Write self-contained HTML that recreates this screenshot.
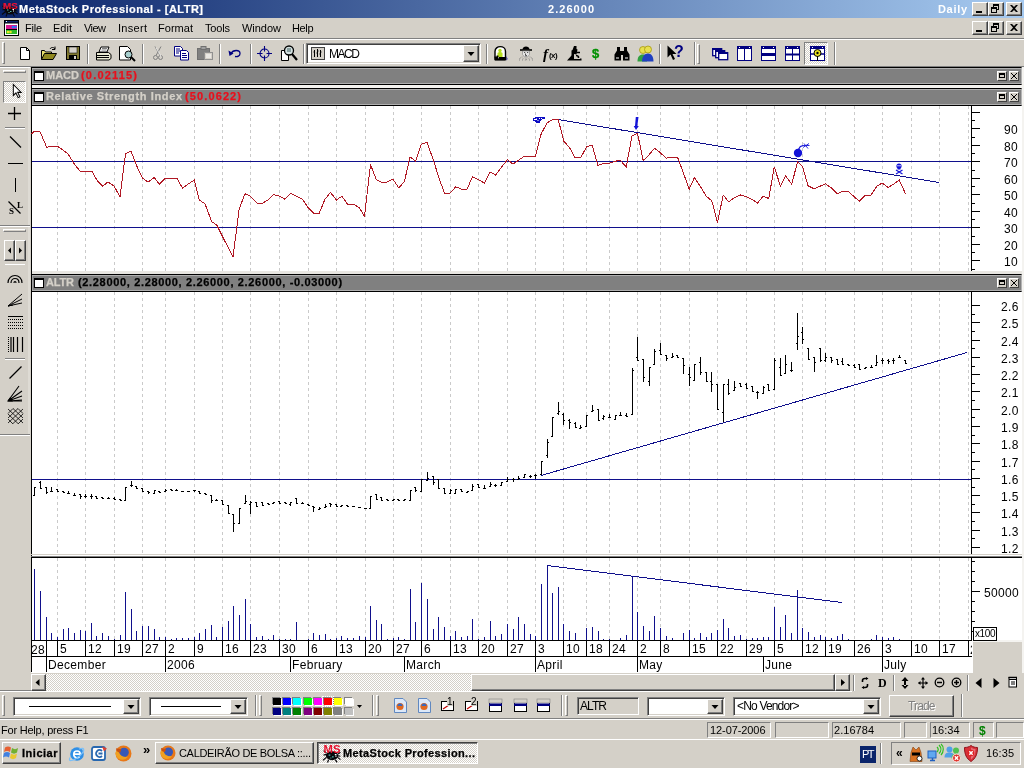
<!DOCTYPE html>
<html><head><meta charset="utf-8"><title>MetaStock Professional - [ALTR]</title>
<style>
html,body{margin:0;padding:0}
body{width:1024px;height:768px;overflow:hidden;background:#d4d0c8;position:relative;font-family:"Liberation Sans",sans-serif;font-size:11px;color:#000}
div,svg{position:absolute;box-sizing:border-box}
.t{white-space:nowrap;will-change:transform}
.a{position:absolute;overflow:visible}
.r{background:#d4d0c8;border:1px solid;border-color:#fff #404040 #404040 #fff;box-shadow:inset -1px -1px 0 #808080,inset 1px 1px 0 #d4d0c8}
.s{border:1px solid;border-color:#808080 #fff #fff #808080;box-shadow:inset 1px 1px 0 #404040,inset -1px -1px 0 #d4d0c8}
.s1{border:1px solid;border-color:#808080 #fff #fff #808080}
.chk{background-color:#fff;background-image:linear-gradient(45deg,#d4d0c8 25%,transparent 25%,transparent 75%,#d4d0c8 75%),linear-gradient(45deg,#d4d0c8 25%,transparent 25%,transparent 75%,#d4d0c8 75%);background-size:2px 2px;background-position:0 0,1px 1px}
.vs{width:2px;border-left:1px solid #808080;border-right:1px solid #fff}
.hs{height:2px;border-top:1px solid #808080;border-bottom:1px solid #fff}
.gr{width:3px;border:1px solid;border-color:#fff #808080 #808080 #fff}
.grh{height:3px;border:1px solid;border-color:#fff #808080 #808080 #fff}
</style></head><body>
<div class="" style="left:0px;top:0px;width:1024px;height:18px;background:linear-gradient(90deg,#0a246a 0%,#a6caf0 100%)"></div>
<svg class="a" style="left:1.5px;top:0.5px;" width="16" height="16" viewBox="0 0 16 16"><ellipse cx="8" cy="9.500" rx="5.500" ry="4" fill="#08080c"/><path d="M3 7l-2.500-2M3 11l-3 2.500M5 13l-1 2.500M11 13l1.500 2.500M13 11l2.500 2M13.500 8l2-1.500M4 8l-3.500 1M12.500 9.500l3 .5" stroke="#08080c" stroke-width="1.100" fill="none"/>
<path d="M5 9h1.500M8 10.500h1.500M6.500 11.500h1" stroke="#58b8b0" stroke-width="1"/><path d="M10.500 8.500h1.500M11 10h1" stroke="#fff" stroke-width="1"/>
<text x="0.500" y="7.500" font-family="Liberation Sans,sans-serif" font-weight="bold" font-size="9" fill="#e8102c" textLength="15" lengthAdjust="spacingAndGlyphs">MS</text></svg>
<div class="t " style="left:19.00px;top:1.79px;font-size:11px;line-height:15px;font-weight:bold;color:#fff;letter-spacing:0.477px;-webkit-text-stroke:0.2px #fff;">MetaStock Professional - [ALTR]</div>
<div class="t " style="left:548.00px;top:1.79px;font-size:11px;line-height:15px;font-weight:bold;color:#fff;letter-spacing:1.040px;">2.26000</div>
<div class="t " style="left:938.00px;top:1.79px;font-size:11px;line-height:15px;font-weight:bold;color:#fff;letter-spacing:0.678px;">Daily</div>
<div class="r" style="left:972px;top:2px;width:16px;height:14px;"></div>
<svg class="a" style="left:972px;top:2px;" width="16" height="14" viewBox="0 0 16 14"><rect x="4" y="9" width="6" height="2" fill="#000"/></svg>
<div class="r" style="left:988px;top:2px;width:16px;height:14px;"></div>
<svg class="a" style="left:988px;top:2px;" width="16" height="14" viewBox="0 0 16 14"><path d="M5 2h6v2h-6zM5 4h1v2h-1zM10 4h1v4h-2v-1h1zM3 5h6v2h-6zM3 7h1v4h-1zM8 7h1v4h-1zM3 10h6v1h-6z" fill="#000"/></svg>
<div class="r" style="left:1006px;top:2px;width:16px;height:14px;"></div>
<svg class="a" style="left:1006px;top:2px;" width="16" height="14" viewBox="0 0 16 14"><path d="M4 3h2l2 2 2-2h2l-3 3.5 3 3.5h-2l-2-2-2 2h-2l3-3.5z" fill="#000"/></svg>
<div class="r" style="left:972px;top:21px;width:16px;height:14px;"></div>
<svg class="a" style="left:972px;top:21px;" width="16" height="14" viewBox="0 0 16 14"><rect x="4" y="9" width="6" height="2" fill="#000"/></svg>
<div class="r" style="left:988px;top:21px;width:16px;height:14px;"></div>
<svg class="a" style="left:988px;top:21px;" width="16" height="14" viewBox="0 0 16 14"><path d="M5 2h6v2h-6zM5 4h1v2h-1zM10 4h1v4h-2v-1h1zM3 5h6v2h-6zM3 7h1v4h-1zM8 7h1v4h-1zM3 10h6v1h-6z" fill="#000"/></svg>
<div class="r" style="left:1006px;top:21px;width:16px;height:14px;"></div>
<svg class="a" style="left:1006px;top:21px;" width="16" height="14" viewBox="0 0 16 14"><path d="M4 3h2l2 2 2-2h2l-3 3.5 3 3.5h-2l-2-2-2 2h-2l3-3.5z" fill="#000"/></svg>
<svg class="a" style="left:4px;top:20px;" width="15" height="16" viewBox="0 0 15 16"><rect x="0.500" y="0.500" width="14" height="15" fill="#fff" stroke="#000"/><rect x="0.500" y="0.500" width="14" height="2.500" fill="#0a246a" stroke="#000"/><rect x="2" y="1" width="1" height="1" fill="#fff"/>
<rect x="2" y="5" width="11" height="4" fill="#d81890"/><rect x="2" y="9" width="11" height="1" fill="#000"/><rect x="2" y="10" width="11" height="4" fill="#30b828"/>
<circle cx="9" cy="7" r="1.300" fill="#2878ff"/><circle cx="11.500" cy="7" r="1.300" fill="#2878ff"/><circle cx="4" cy="12" r="1.300" fill="#e8e828"/><circle cx="6.500" cy="12" r="1.300" fill="#e8e828"/></svg>
<div class="t " style="left:25.00px;top:20.79px;font-size:11px;line-height:15px;letter-spacing:-0.241px;">File</div>
<div class="t " style="left:53.00px;top:20.79px;font-size:11px;line-height:15px;letter-spacing:0.015px;">Edit</div>
<div class="t " style="left:83.50px;top:20.79px;font-size:11px;line-height:15px;letter-spacing:-0.548px;">View</div>
<div class="t " style="left:117.50px;top:20.79px;font-size:11px;line-height:15px;letter-spacing:0.298px;">Insert</div>
<div class="t " style="left:158.00px;top:20.79px;font-size:11px;line-height:15px;letter-spacing:0.033px;">Format</div>
<div class="t " style="left:204.50px;top:20.79px;font-size:11px;line-height:15px;letter-spacing:-0.170px;">Tools</div>
<div class="t " style="left:241.50px;top:20.79px;font-size:11px;line-height:15px;letter-spacing:-0.024px;">Window</div>
<div class="t " style="left:291.50px;top:20.79px;font-size:11px;line-height:15px;letter-spacing:-0.374px;">Help</div>
<div class="" style="left:0px;top:38px;width:1024px;height:1px;background:#808080"></div>
<div class="" style="left:0px;top:39px;width:1024px;height:1px;background:#fff"></div>
<div class="gr" style="left:2px;top:42px;width:3px;height:22px;"></div>
<div class="vs" style="left:87px;top:44px;width:2px;height:20px;"></div>
<div class="vs" style="left:141.5px;top:44px;width:2px;height:20px;"></div>
<div class="vs" style="left:219px;top:44px;width:2px;height:20px;"></div>
<div class="vs" style="left:249.5px;top:44px;width:2px;height:20px;"></div>
<div class="vs" style="left:303px;top:44px;width:2px;height:20px;"></div>
<div class="vs" style="left:485.5px;top:44px;width:2px;height:20px;"></div>
<div class="vs" style="left:659px;top:44px;width:2px;height:20px;"></div>
<svg class="a" style="left:20px;top:47px;" width="11" height="13" viewBox="0 0 11 13"><path d="M0.500 0.500h6l3 3v9h-9z" fill="#fff" stroke="#000"/><path d="M6.500 0.500v3h3" fill="none" stroke="#000"/></svg>
<svg class="a" style="left:41px;top:46px;" width="16" height="15" viewBox="0 0 16 15"><path d="M0.5 13.5v-9h3l1 1.5h6v3" fill="#e8e070" stroke="#000"/><path d="M0.5 13.5l3-6h12l-3.5 6z" fill="#908820" stroke="#000"/><path d="M9 3c1-2 4-2 5 0M14 0.5v3h-3" fill="none" stroke="#000"/></svg>
<svg class="a" style="left:66px;top:46px;" width="15" height="15" viewBox="0 0 15 15"><rect x="0.5" y="0.5" width="13" height="13" fill="#807830" stroke="#000"/><rect x="3" y="1" width="8" height="6" fill="#d4d0c8" stroke="#000" stroke-width="0.5"/><rect x="3" y="9" width="8" height="5" fill="#000"/><rect x="8" y="10" width="2" height="3" fill="#d4d0c8"/></svg>
<svg class="a" style="left:95px;top:46px;" width="17" height="15" viewBox="0 0 17 15"><path d="M4 6l2-5h8l-2 5z" fill="#fff" stroke="#000"/><path d="M1.500 6.500h12l2.500 2v4l-2 1.500h-12.500z" fill="#e8e8d0" stroke="#000"/><path d="M1.500 9.500h12.500M1.500 11.500h12.500" stroke="#000"/><path d="M7 2.500h5M6.500 4h5" stroke="#808080"/></svg>
<svg class="a" style="left:119px;top:46px;" width="17" height="16" viewBox="0 0 17 16"><path d="M0.5 0.5h8l3 3v10.500h-11z" fill="#fff" stroke="#000"/><circle cx="9.500" cy="8.500" r="3.500" fill="#a8d0d0" stroke="#000"/><path d="M12 11l4 4" stroke="#000" stroke-width="2"/></svg>
<svg class="a" style="left:153px;top:46px;" width="10" height="15" viewBox="0 0 10 15"><path d="M2 0.500l5 9M8 0.500l-5 9" stroke="#808080" fill="none"/><circle cx="2.500" cy="11.500" r="2" fill="none" stroke="#808080"/><circle cx="7.500" cy="11.500" r="2" fill="none" stroke="#808080"/><path d="M3 1.500l5 9" stroke="#fff" fill="none" opacity=".7"/></svg>
<svg class="a" style="left:174px;top:46px;" width="16" height="15" viewBox="0 0 16 15"><path d="M0.5 0.5h6l2 2v7.500h-8z" fill="#fff" stroke="#000080"/><path d="M6.500 4.500h6l2 2v7.500h-8z" fill="#fff" stroke="#000080"/><path d="M2 3h4M2 5h4M2 7h3M8 7.500h4M8 9.500h5M8 11.500h5" stroke="#000080"/></svg>
<svg class="a" style="left:197px;top:46px;" width="17" height="15" viewBox="0 0 17 15"><rect x="0.5" y="2.500" width="12" height="11" fill="#808080" stroke="#707070"/><rect x="4" y="0.500" width="5" height="3" fill="#a0a0a0" stroke="#707070"/><rect x="7.500" y="6.500" width="8" height="7" fill="#d4d0c8" stroke="#909090"/><path d="M9 9h5M9 11h5" stroke="#fff"/></svg>
<svg class="a" style="left:228px;top:49px;" width="14" height="9" viewBox="0 0 14 9"><path d="M3 4.500c2-4 9-4 9 0c0 2.500-2.500 3.500-5 3" fill="none" stroke="#000080" stroke-width="1.300"/><path d="M0.500 1.500l1 5.500 4-2.500z" fill="#000080"/></svg>
<svg class="a" style="left:257px;top:46px;" width="15" height="15" viewBox="0 0 15 15"><circle cx="7.500" cy="7.500" r="4.500" fill="none" stroke="#000080" stroke-width="1.100"/><path d="M7.500 0v5.500M7.500 9.500v5.500M0 7.500h5.500M9.500 7.500h5.500" stroke="#000080" stroke-width="1.100"/></svg>
<svg class="a" style="left:281px;top:45px;" width="17" height="17" viewBox="0 0 17 17"><path d="M0.500 5.500h7v10h-7z" fill="#fff" stroke="#000"/><circle cx="8" cy="5.500" r="4.500" fill="#d4e0e0" stroke="#000" stroke-width="1.300"/><path d="M6 4h4M6 6h4" stroke="#406060"/><path d="M11 9l5 6" stroke="#000" stroke-width="2.200"/></svg>
<div class="s" style="left:306px;top:43px;width:175px;height:21px;background:#fff"></div>
<div class="r" style="left:463px;top:45px;width:16px;height:17px;"></div>
<svg class="a" style="left:463px;top:45px;" width="16" height="17" viewBox="0 0 16 17"><path d="M4.500 7h7l-3.500 4z" fill="#000"/></svg>
<svg class="a" style="left:311px;top:47px;" width="14" height="13" viewBox="0 0 14 13"><rect x="0.500" y="0.500" width="13" height="12" fill="#d4d0c8" stroke="#404040"/><path d="M3.500 3v7M6.500 2v8M9.500 3v7M2.500 5h1M6.500 4h1M5.500 6h1M9.500 5h1M8.500 7h1" stroke="#000"/></svg>
<div class="t " style="left:328.50px;top:46.44px;font-size:12px;line-height:16px;letter-spacing:-1.444px;">MACD</div>
<svg class="a" style="left:494px;top:46px;" width="14" height="15" viewBox="0 0 14 15"><path d="M12 10l2 3-2 1.500z" fill="#6868b8"/><path d="M1 13.500v-8c0-6.500 10.500-6.500 10.500 0v8z" fill="#fff" stroke="#000" stroke-width="1.400"/><circle cx="6" cy="4.500" r="1.700" fill="#b8e020"/><path d="M3.500 11v-3.500c0-2 5-2 5 0v3.500z" fill="#b8e020"/><path d="M0.500 11.500h3v-2M1 13.500h10.500" stroke="#000" stroke-width="1.800" fill="none"/><path d="M5 11h6v2.500h-6z" fill="#000"/></svg>
<svg class="a" style="left:519px;top:46px;" width="14" height="15" viewBox="0 0 14 15"><path d="M3.500 3.500c0-4 7-4 7 0z" fill="#000"/><path d="M1 4h12" stroke="#000" stroke-width="1.600"/><path d="M3.500 5h7v3.500l-2 2.500h-3l-2-2.500z" fill="#e4e4e4" stroke="#808080" stroke-width=".6"/><path d="M5 6.500h1.200M8 6.500h1.200M6.500 7.500v1.500l1 .5M6 9.800h2" stroke="#303030" stroke-width=".8" fill="none"/><path d="M0.500 14.500c0-3 1.500-3.500 3-3.500M13.500 14.500c0-3-1.500-3.500-3-3.500M3.500 14.500c0-2 .8-2.500 1.700-2.500M10.500 14.500c0-2-.8-2.500-1.700-2.500M6.300 14.500c0-1.500.4-2 .7-2s.7.500.7 2" stroke="#808080" stroke-width=".9" stroke-dasharray="1,.6" fill="none"/></svg>
<div class="t" style="left:542.5px;top:44.5px;font-family:'Liberation Serif',serif;font-style:italic;font-weight:bold;font-size:15px;line-height:18px">f</div>
<div class="t" style="left:548.5px;top:50.5px;font-size:8px;font-weight:bold;line-height:10px;letter-spacing:-0.6px">(x)</div>
<svg class="a" style="left:567px;top:46px;" width="15" height="15" viewBox="0 0 15 15"><path d="M7 0h2.500v3l1 .5-1 5-2.500-.5v2h-2.500v-5.500l1-.500z" fill="#000"/><path d="M9.500 6.500h3.500M9 9.500c2.500 0 3.500 2 1.500 3.500" stroke="#000" stroke-width="1.600" fill="none"/><path d="M0 14.500l4.500-5h2.500v3h7.500v2z" fill="#000"/><path d="M7 12.500h6" stroke="#d4d0c8" stroke-width="1"/></svg>
<div class="t " style="left:592.00px;top:45.10px;font-size:13px;line-height:17px;font-weight:bold;color:#009000;-webkit-text-stroke:0.3px #009000;">$</div>
<svg class="a" style="left:614px;top:46px;" width="16" height="15" viewBox="0 0 16 15"><path d="M3 1h3v4h-3zM10 1h3v4h-3zM6 5h4v4h-4z" fill="#000"/><path d="M0.500 14.500v-6l2.500-4h3l1 4v6zM15.500 14.500v-6l-2.500-4h-3l-1 4v6z" fill="#000"/><path d="M2 12h3M11 12h3" stroke="#fff"/></svg>
<svg class="a" style="left:637px;top:45px;" width="17" height="17" viewBox="0 0 17 17"><circle cx="6" cy="5" r="3.500" fill="#e8e050" stroke="#a09000" stroke-width=".7"/><circle cx="11" cy="4.500" r="3.500" fill="#e8e050" stroke="#a09000" stroke-width=".7"/><path d="M0.500 16.500c0-5 2-7 5.500-7s4 2 4 7z" fill="#30a040"/><path d="M5 16.500c0-5 2.500-8 6-8s5.500 3 5.500 8z" fill="#2040c0"/></svg>
<svg class="a" style="left:667px;top:45px;" width="17" height="17" viewBox="0 0 17 17"><path d="M0.500 0.500v12l3-3 2.500 5.500 2-1-2.500-5h4z" fill="#000"/></svg>
<div class="t" style="left:674px;top:43px;font-weight:bold;font-size:16px;line-height:18px;color:#000080">?</div>
<div class="vs" style="left:693.5px;top:42px;width:2px;height:23px;"></div>
<div class="gr" style="left:697px;top:44px;width:3px;height:20px;"></div>
<svg class="a" style="left:712px;top:48px;" width="16" height="13" viewBox="0 0 16 13"><g fill="#fff" stroke="#000080" stroke-width="1.300"><rect x="0.700" y="0.700" width="9" height="7"/><rect x="3.700" y="2.700" width="9" height="7"/><rect x="6.700" y="4.700" width="9" height="7"/></g><path d="M0 0h10v2h-10zM3 2h10v2h-10zM6 4h10v2h-10z" fill="#000080"/></svg>
<svg class="a" style="left:737px;top:46px;" width="16" height="16" viewBox="0 0 16 16"><rect x="0.500" y="0.500" width="14" height="14" fill="#fff" stroke="#000080" stroke-width="1"/><rect x="0" y="0" width="15" height="3" fill="#000080"/><path d="M2 1.500h1M12 1.500h1" stroke="#fff"/><path d="M7.500 1v14" stroke="#000080" stroke-width="1"/></svg>
<svg class="a" style="left:760.5px;top:46px;" width="16" height="16" viewBox="0 0 16 16"><rect x="0.500" y="0.500" width="14" height="14" fill="#fff" stroke="#000080" stroke-width="1"/><rect x="0" y="0" width="15" height="3" fill="#000080"/><path d="M2 1.500h1M12 1.500h1" stroke="#fff"/><path d="M0 8.500h15" stroke="#000080" stroke-width="3"/></svg>
<svg class="a" style="left:785px;top:46px;" width="16" height="16" viewBox="0 0 16 16"><rect x="0.500" y="0.500" width="14" height="14" fill="#fff" stroke="#000080" stroke-width="1"/><rect x="0" y="0" width="15" height="3" fill="#000080"/><path d="M2 1.500h1M12 1.500h1" stroke="#fff"/><path d="M7.500 1v14" stroke="#000080" stroke-width="1"/><path d="M0 8.500h15" stroke="#000080" stroke-width="2"/></svg>
<div class="s1 chk" style="left:804px;top:42px;width:24px;height:23px;"></div>
<svg class="a" style="left:810px;top:46px;" width="16" height="16" viewBox="0 0 16 16"><rect x="0.500" y="0.500" width="14" height="14" fill="#fff" stroke="#000080" stroke-width="1"/><rect x="0" y="0" width="15" height="3" fill="#000080"/><path d="M2 1.500h1M12 1.500h1" stroke="#fff"/><path d="M0 8h15" stroke="#000080" stroke-width="1.500"/><circle cx="7.500" cy="7" r="3.500" fill="#e8e020" stroke="#000" stroke-width="1"/><circle cx="7.500" cy="7" r="1.200" fill="#000"/><path d="M7.500 10v5" stroke="#000"/></svg>
<div class="vs" style="left:834px;top:42px;width:2px;height:23px;"></div>
<div class="" style="left:0px;top:66px;width:1024px;height:1px;background:#808080"></div>
<div class="" style="left:0px;top:67px;width:30px;height:1px;background:#fff"></div>
<div class="" style="left:28px;top:68px;width:2px;height:366px;background:#dedbd4"></div>
<div class="grh" style="left:3px;top:70px;width:23px;height:3px;"></div>
<div class="s1 chk" style="left:3px;top:81px;width:23px;height:22px;"></div>
<svg class="a" style="left:11.5px;top:83.5px;" width="10.5" height="15" viewBox="0 0 12 17"><path d="M1.500 0.500v12.500l3-3 2.500 5.500 2-1-2.500-5h4z" fill="#fff" stroke="#000" stroke-width="1.150"/></svg>
<svg class="a" style="left:8px;top:107px;" width="13" height="13" viewBox="0 0 13 13"><path d="M6.500 0v13M0 6.500h13" stroke="#000" stroke-width="1.300"/></svg>
<div class="hs" style="left:5px;top:127px;width:20px;height:2px;"></div>
<svg class="a" style="left:9px;top:136px;" width="13" height="12" viewBox="0 0 13 12"><path d="M1 0.500l11 11" stroke="#000" stroke-width="1.200"/></svg>
<div class="" style="left:8px;top:163px;width:15px;height:1px;background:#000"></div>
<div class="" style="left:15px;top:178px;width:1px;height:14px;background:#000"></div>
<svg class="a" style="left:7px;top:199px;" width="16" height="16" viewBox="0 0 16 16"><path d="M1.500 2.500l12 12" stroke="#000" stroke-width="1.200"/></svg>
<div class="t " style="left:17.00px;top:198.98px;font-size:9px;line-height:13px;font-weight:bold;font-family:'Liberation Serif',serif;">L</div>
<div class="t " style="left:8.50px;top:204.98px;font-size:9px;line-height:13px;font-weight:bold;font-family:'Liberation Serif',serif;">S</div>
<div class="" style="left:0px;top:225px;width:30px;height:1px;background:#808080"></div>
<div class="" style="left:0px;top:226px;width:30px;height:1px;background:#fff"></div>
<div class="grh" style="left:3px;top:229px;width:23px;height:3px;"></div>
<div class="r" style="left:3.5px;top:240px;width:11px;height:21px;"></div>
<div class="r" style="left:15px;top:240px;width:11px;height:21px;"></div>
<svg class="a" style="left:3.5px;top:240px;" width="11" height="21" viewBox="0 0 11 21"><path d="M7 7.500v6l-3-3z" fill="#000"/></svg>
<svg class="a" style="left:15px;top:240px;" width="11" height="21" viewBox="0 0 11 21"><path d="M4 7.500v6l3-3z" fill="#000"/></svg>
<div class="" style="left:5px;top:264px;width:20px;height:1px;background:#fff"></div>
<svg class="a" style="left:7px;top:274px;" width="16" height="10" viewBox="0 0 16 10"><path d="M1 9c0-10 14-10 14 0M4 9c0-6 8-6 8 0M7 9c0-2 2-2 2 0" fill="none" stroke="#000" stroke-width="1.200"/></svg>
<svg class="a" style="left:7px;top:293px;" width="16" height="14" viewBox="0 0 16 14"><path d="M1 13l14-12M1 13l14-7M1 13l14-3M1 13l5-1" stroke="#000" stroke-width="1" fill="none"/></svg>
<svg class="a" style="left:8px;top:315px;" width="15" height="15" viewBox="0 0 15 15"><path d="M0 1.500h15" stroke="#000"/><path d="M0 4.500h15M0 7.500h15M0 10.500h15M0 13.500h15" stroke="#000" stroke-dasharray="1,1"/></svg>
<svg class="a" style="left:8px;top:337px;" width="15" height="15" viewBox="0 0 15 15"><path d="M0.500 0v15" stroke="#000" stroke-dasharray="1,1"/><path d="M3 0v15M5.500 0v15M9.500 0v15M14.500 0v15" stroke="#000" stroke-width="1.200"/></svg>
<div class="hs" style="left:5px;top:358px;width:20px;height:2px;"></div>
<svg class="a" style="left:9px;top:366px;" width="13" height="13" viewBox="0 0 13 13"><path d="M0.500 12.500l12-12" stroke="#000" stroke-width="1.200"/></svg>
<svg class="a" style="left:7px;top:386px;" width="16" height="16" viewBox="0 0 16 16"><path d="M1 15l11-15M1 15l14-10M1 15l14-5M1 15l14-1M1 15h14" stroke="#000" stroke-width="1.100" fill="none"/><path d="M0 15.500l3-4 3 4z" fill="#000"/></svg>
<svg class="a" style="left:8px;top:408px;" width="15" height="16" viewBox="0 0 15 16"><path d="M0 1l15 14M0 6l10 9.500M0 11l5 5M5 0.500l10 9.500M10 0.500l5 5M15 1l-15 14M15 6l-10 9.500M15 11l-5 5M10 0.500l-10 9.500M5 0.500l-5 5" stroke="#000" stroke-width=".8" fill="none"/></svg>
<div class="" style="left:0px;top:434px;width:30px;height:1px;background:#808080"></div>
<div class="" style="left:0px;top:435px;width:30px;height:1px;background:#fff"></div>
<div class="" style="left:31px;top:67px;width:991px;height:606px;background:#fff"></div>
<div class="" style="left:1022px;top:67px;width:2px;height:606px;background:#f4f3f0"></div>
<div class="" style="left:31px;top:67px;width:991px;height:18px;background:#808080;border:1px solid #000;border-right-color:#b4b4b4;box-shadow:inset 0 1px 0 #b0b0b0,inset 0 -1px 0 #b0b0b0,inset 1px 0 0 #a0a0a0"></div>
<div class="" style="left:34px;top:71px;width:10px;height:10px;background:#fff;border:1px solid #000;border-top-width:2px"></div>
<div class="t " style="left:45.50px;top:68.49px;font-size:11px;line-height:15px;font-weight:bold;color:#d4d0c8;letter-spacing:0.002px;-webkit-text-stroke:0.25px #d4d0c8;">MACD</div>
<div class="t " style="left:81.00px;top:68.49px;font-size:11px;line-height:15px;font-weight:bold;color:#e8101c;letter-spacing:1.190px;-webkit-text-stroke:0.25px #e8101c;">(0.02115)</div>
<div class="" style="left:997px;top:71px;width:10px;height:10px;background:#d4d0c8;border:1px solid;border-color:#fff #404040 #404040 #fff"></div>
<svg class="a" style="left:997px;top:71px;" width="10" height="10" viewBox="0 0 10 10"><rect x="2.500" y="2.500" width="5" height="4" fill="none" stroke="#000"/><rect x="2" y="2" width="6" height="2" fill="#000"/></svg>
<div class="" style="left:1009px;top:71px;width:10px;height:10px;background:#d4d0c8;border:1px solid;border-color:#fff #404040 #404040 #fff"></div>
<svg class="a" style="left:1009px;top:71px;" width="10" height="10" viewBox="0 0 10 10"><path d="M2 2l6 6M8 2l-6 6" stroke="#000" stroke-width="1" shape-rendering="crispEdges"/></svg>
<div class="" style="left:31px;top:85px;width:991px;height:3px;background:#f4f3f0"></div>
<div class="" style="left:31px;top:88px;width:991px;height:18px;background:#808080;border:1px solid #000;border-right-color:#b4b4b4;box-shadow:inset 0 1px 0 #b0b0b0,inset 0 -1px 0 #b0b0b0,inset 1px 0 0 #a0a0a0"></div>
<div class="" style="left:34px;top:92px;width:10px;height:10px;background:#fff;border:1px solid #000;border-top-width:2px"></div>
<div class="t " style="left:45.50px;top:89.49px;font-size:11px;line-height:15px;font-weight:bold;color:#d4d0c8;letter-spacing:0.625px;-webkit-text-stroke:0.25px #d4d0c8;">Relative Strength Index</div>
<div class="t " style="left:184.50px;top:89.49px;font-size:11px;line-height:15px;font-weight:bold;color:#e8101c;letter-spacing:1.115px;-webkit-text-stroke:0.25px #e8101c;">(50.0622)</div>
<div class="" style="left:997px;top:92px;width:10px;height:10px;background:#d4d0c8;border:1px solid;border-color:#fff #404040 #404040 #fff"></div>
<svg class="a" style="left:997px;top:92px;" width="10" height="10" viewBox="0 0 10 10"><rect x="2.500" y="2.500" width="5" height="4" fill="none" stroke="#000"/><rect x="2" y="2" width="6" height="2" fill="#000"/></svg>
<div class="" style="left:1009px;top:92px;width:10px;height:10px;background:#d4d0c8;border:1px solid;border-color:#fff #404040 #404040 #fff"></div>
<svg class="a" style="left:1009px;top:92px;" width="10" height="10" viewBox="0 0 10 10"><path d="M2 2l6 6M8 2l-6 6" stroke="#000" stroke-width="1" shape-rendering="crispEdges"/></svg>
<div class="" style="left:31px;top:271px;width:991px;height:3px;background:#e8e6e1"></div>
<div class="" style="left:31px;top:274px;width:991px;height:18px;background:#808080;border:1px solid #000;border-right-color:#b4b4b4;box-shadow:inset 0 1px 0 #b0b0b0,inset 0 -1px 0 #b0b0b0,inset 1px 0 0 #a0a0a0"></div>
<div class="" style="left:34px;top:278px;width:10px;height:10px;background:#fff;border:1px solid #000;border-top-width:2px"></div>
<div class="t " style="left:45.50px;top:275.49px;font-size:11px;line-height:15px;font-weight:bold;color:#d4d0c8;letter-spacing:-0.170px;-webkit-text-stroke:0.25px #d4d0c8;">ALTR</div>
<div class="t " style="left:78.00px;top:275.49px;font-size:11px;line-height:15px;font-weight:bold;letter-spacing:0.662px;-webkit-text-stroke:0.25px #000;">(2.28000, 2.28000, 2.26000, 2.26000, -0.03000)</div>
<div class="" style="left:997px;top:278px;width:10px;height:10px;background:#d4d0c8;border:1px solid;border-color:#fff #404040 #404040 #fff"></div>
<svg class="a" style="left:997px;top:278px;" width="10" height="10" viewBox="0 0 10 10"><rect x="2.500" y="2.500" width="5" height="4" fill="none" stroke="#000"/><rect x="2" y="2" width="6" height="2" fill="#000"/></svg>
<div class="" style="left:1009px;top:278px;width:10px;height:10px;background:#d4d0c8;border:1px solid;border-color:#fff #404040 #404040 #fff"></div>
<svg class="a" style="left:1009px;top:278px;" width="10" height="10" viewBox="0 0 10 10"><path d="M2 2l6 6M8 2l-6 6" stroke="#000" stroke-width="1" shape-rendering="crispEdges"/></svg>
<div class="" style="left:31px;top:67px;width:1px;height:605px;background:#000"></div>
<svg class="a" style="left:0;top:0" width="1024" height="768" viewBox="0 0 1024 768"><g shape-rendering="crispEdges" fill="none"><path d="M57.5 106V271M57.5 292V554M57.5 558V640M85.5 106V271M85.5 292V554M85.5 558V640M114.5 106V271M114.5 292V554M114.5 558V640M142.5 106V271M142.5 292V554M142.5 558V640M165.5 106V271M165.5 292V554M165.5 558V640M194.5 106V271M194.5 292V554M194.5 558V640M222.5 106V271M222.5 292V554M222.5 558V640M250.5 106V271M250.5 292V554M250.5 558V640M279.5 106V271M279.5 292V554M279.5 558V640M308.5 106V271M308.5 292V554M308.5 558V640M336.5 106V271M336.5 292V554M336.5 558V640M365.5 106V271M365.5 292V554M365.5 558V640M393.5 106V271M393.5 292V554M393.5 558V640M421.5 106V271M421.5 292V554M421.5 558V640M450.5 106V271M450.5 292V554M450.5 558V640M478.5 106V271M478.5 292V554M478.5 558V640M507.5 106V271M507.5 292V554M507.5 558V640M535.5 106V271M535.5 292V554M535.5 558V640M563.5 106V271M563.5 292V554M563.5 558V640M586.5 106V271M586.5 292V554M586.5 558V640M609.5 106V271M609.5 292V554M609.5 558V640M637.5 106V271M637.5 292V554M637.5 558V640M660.5 106V271M660.5 292V554M660.5 558V640M689.5 106V271M689.5 292V554M689.5 558V640M717.5 106V271M717.5 292V554M717.5 558V640M746.5 106V271M746.5 292V554M746.5 558V640M774.5 106V271M774.5 292V554M774.5 558V640M802.5 106V271M802.5 292V554M802.5 558V640M825.5 106V271M825.5 292V554M825.5 558V640M854.5 106V271M854.5 292V554M854.5 558V640M882.5 106V271M882.5 292V554M882.5 558V640M911.5 106V271M911.5 292V554M911.5 558V640M939.5 106V271M939.5 292V554M939.5 558V640M968.5 106V271M968.5 292V554M968.5 558V640" stroke="#cacaca" stroke-dasharray="3,3"/><path d="M31 554.500H1022" stroke="#d4d0c8"/><path d="M31 556.500H1022" stroke="#808080"/><path d="M31 557.500H1022" stroke="#000"/><path d="M971.500 106V271M971.500 292V554M971.500 558V640" stroke="#000"/><path d="M972 269.5H975M972 260.5H980M972 252.5H975M972 244.5H980M972 236.5H975M972 227.5H980M972 219.5H975M972 211.5H980M972 203.5H975M972 194.5H980M972 186.5H975M972 178.5H980M972 170.5H975M972 161.5H980M972 153.5H975M972 145.5H980M972 137.5H975M972 128.5H980M972 120.5H975M972 112.500H980M972 547.5H980M972 538.5H975M972 530.5H980M972 521.5H975M972 512.5H980M972 504.5H975M972 495.5H980M972 487.5H975M972 478.5H980M972 469.5H975M972 461.5H980M972 452.5H975M972 443.5H980M972 435.5H975M972 426.5H980M972 417.5H975M972 409.5H980M972 400.5H975M972 391.5H980M972 383.5H975M972 374.5H980M972 366.5H975M972 357.5H980M972 348.5H975M972 340.5H980M972 331.5H975M972 322.5H980M972 314.5H975M972 305.5H980M972 561.5H975M972 571.5H975M972 581.5H975M972 591.5H980M972 601.5H975M972 611.5H975M972 621.5H975M972 631.5H975" stroke="#000"/><path d="M32 161.500H971M32 227.500H971M32 479.500H971" stroke="#10108c"/></g><g fill="none" stroke="#10108c" stroke-width="1" shape-rendering="crispEdges"><path d="M558 119.500L939 182.500M541 475.500L967 352.500M547 565.500L842 602.500"/></g><polyline fill="none" stroke="#b01824" stroke-width="1" shape-rendering="crispEdges" points="31.5,133.8 34.2,131.2 39.8,131.2 46.8,147.5 49.8,146.2 57.5,146.2 63.0,150.0 68.0,153.8 74.2,163.8 80.0,171.2 91.8,171.2 96.8,180.0 102.5,186.2 108.0,182.0 114.2,186.2 120.0,197.0 125.5,153.8 131.0,151.2 136.8,166.2 142.5,178.0 148.0,182.0 154.2,177.5 159.2,184.2 165.5,178.2 176.8,178.2 182.5,188.0 194.2,180.0 199.2,200.0 205.0,203.8 211.8,221.8 216.8,225.0 223.0,237.5 233.0,257.0 239.2,208.8 245.0,193.8 250.5,196.2 256.8,203.0 262.8,203.0 268.0,200.0 273.5,194.5 279.3,196.2 285.0,199.2 290.5,193.2 302.5,199.2 308.0,207.5 313.8,213.2 319.2,213.2 325.0,199.2 330.5,192.5 336.5,200.0 341.8,196.2 347.5,204.0 353.2,204.0 359.5,208.0 364.5,216.2 370.5,164.5 376.2,179.5 381.2,182.0 387.0,182.0 393.0,179.2 398.8,188.0 404.5,181.2 410.0,156.8 415.5,161.2 421.2,144.2 427.0,142.5 433.0,158.8 438.8,177.5 444.5,193.2 450.0,193.2 455.8,186.8 461.8,189.2 467.0,189.2 472.5,176.8 484.5,183.0 490.0,171.8 495.5,175.0 507.5,159.5 513.0,164.2 518.8,160.0 524.5,156.2 535.5,156.2 541.2,133.8 547.0,123.0 552.5,119.5 558.2,119.5 563.8,141.2 569.5,147.5 575.0,157.5 580.8,157.5 586.5,147.0 592.0,145.0 598.0,165.5 603.8,163.2 609.5,163.2 615.0,161.2 620.5,160.5 626.2,167.0 632.0,136.2 637.5,133.2 643.2,160.5 648.8,155.0 654.5,148.2 660.0,152.5 666.2,158.2 671.8,157.0 677.5,157.0 683.2,172.5 689.2,189.2 694.5,177.5 700.5,186.8 706.2,196.2 711.8,200.8 717.5,222.5 723.2,195.0 728.8,202.0 734.5,197.5 740.5,195.0 746.2,196.8 752.0,199.5 757.5,203.0 763.2,196.2 768.8,198.5 774.2,166.8 780.5,186.2 785.5,175.8 791.8,184.2 797.5,161.8 802.5,166.2 808.0,185.8 814.2,188.8 825.5,183.8 831.8,188.2 837.5,193.8 842.5,191.2 848.0,191.2 859.2,201.2 865.5,195.0 871.0,195.0 876.8,186.2 882.2,183.0 888.0,187.5 893.5,184.2 899.2,180.0 905.5,193.8"/><g fill="#1414d8" stroke="none"><path d="M535 117h10v2h-3v1h-1v1h-1v2h-4v-1h-1v-1h-2v-3h2z" fill="#0c0cc4"/><path d="M539 118h1v1h-1zM541 118h1v1h-1zM534 119h2v1h-2zM536 118.500h1v1.500h-1zM537.500 120h1v1h-1z" fill="#fff"/><path d="M635.800 117h2.700l-1.200 9h1.500l-2.800 4-2.300-4h1.300z"/><circle cx="798" cy="153" r="4.200"/><path d="M798 149l2-3 3-1v1.200l-2.300.8-1.500 2.500z"/><path d="M803 147.500l6-4M804 143.500l4 5M802.500 145.500h7" stroke="#1414d8" stroke-width=".9" fill="none"/><circle cx="899" cy="166" r="2.600"/><rect x="897.500" y="167.500" width="3" height="2"/><path d="M896 170l6.500 4M902.500 170l-6.500 4" stroke="#1414d8" stroke-width="1.300" fill="none"/><circle cx="898" cy="165.800" r=".7" fill="#fff"/><circle cx="900" cy="165.800" r=".7" fill="#fff"/></g><g shape-rendering="crispEdges" fill="none"><path d="M34.5 487V496M33 495.5h1M35 487.5h1M40.5 481V489M39 482.5h1M41 488.5h1M46.5 487V494M45 487.5h1M47 492.5h1M51.5 487V492M50 491.5h1M52 491.5h1M57.5 489V492M56 489.5h1M58 491.5h1M63.5 491V493M62 491.5h1M64 492.5h1M68.5 491V494M67 493.5h1M69 493.5h1M74.5 493V496M73 495.5h1M75 495.5h1M80.5 494V499M79 494.5h1M81 496.5h1M85.5 494V498M84 496.5h1M86 496.5h1M91.5 494V499M90 496.5h1M92 496.5h1M96.5 496V499M95 496.5h1M97 498.5h1M102.5 497V499M101 497.5h1M103 498.5h1M108.5 497V499M107 498.5h1M109 498.5h1M114.5 497V500M113 498.5h1M115 499.5h1M120.5 499V501M119 499.5h1M121 500.5h1M125.5 487V501M124 500.5h1M126 487.5h1M131.5 481V487M130 485.5h1M132 485.5h1M136.5 486V489M135 486.5h1M137 488.5h1M142.5 488V492M141 488.5h1M143 491.5h1M148.5 491V494M147 491.5h1M149 492.5h1M154.5 490V494M153 493.5h1M155 490.5h1M159.5 491V493M158 491.5h1M160 492.5h1M165.5 489V492M164 491.5h1M166 490.5h1M171.5 489V491M170 489.5h1M172 490.5h1M176.5 489V491M175 490.5h1M177 490.5h1M182.5 491V492M181 491.5h1M183 491.5h1M188.5 491V492M187 491.5h1M189 491.5h1M194.5 490V492M193 490.5h1M195 490.5h1M199.5 491V494M198 491.5h1M200 493.5h1M205.5 493V495M204 493.5h1M206 494.5h1M211.5 495V503M210 495.5h1M212 500.5h1M216.5 499V501M215 500.5h1M217 500.5h1M222.5 500V505M221 500.5h1M223 504.5h1M228.5 505V514M227 505.5h1M229 513.5h1M233.5 514V532M232 514.5h1M234 523.5h1M239.5 508V524M238 523.5h1M240 508.5h1M245.5 495V504M244 503.5h1M246 501.5h1M250.5 501V514M249 504.5h1M251 502.5h1M256.5 502V507M255 502.5h1M257 506.5h1M262.5 502V506M261 502.5h1M263 505.5h1M268.5 503V505M267 503.5h1M269 504.5h1M273.5 502V504M272 503.5h1M274 502.5h1M279.5 501V504M278 501.5h1M280 503.5h1M285.5 502V504M284 502.5h1M286 503.5h1M290.5 502V506M289 504.5h1M291 502.5h1M296.5 498V504M295 498.5h1M297 503.5h1M302.5 502V504M301 503.5h1M303 503.5h1M308.5 504V506M307 504.5h1M309 505.5h1M313.5 506V512M312 506.5h1M314 507.5h1M319.5 507V510M318 509.5h1M320 508.5h1M325.5 504V508M324 507.5h1M326 506.5h1M330.5 503V507M329 503.5h1M331 504.5h1M336.5 504V507M335 504.5h1M337 506.5h1M341.5 505V507M340 506.5h1M342 505.5h1M347.5 505V507M346 505.5h1M348 506.5h1M353.5 506V507M352 506.5h1M354 506.5h1M359.5 507V508M358 507.5h1M360 507.5h1M365.5 508V509M364 508.5h1M366 508.5h1M370.5 496V509M369 508.5h1M371 496.5h1M376.5 494V500M375 494.5h1M377 499.5h1M381.5 497V501M380 497.5h1M382 500.5h1M387.5 499V501M386 499.5h1M388 500.5h1M393.5 499V501M392 500.5h1M394 499.5h1M398.5 499V501M397 499.5h1M399 500.5h1M404.5 499V501M403 500.5h1M405 499.5h1M410.5 490V501M409 500.5h1M411 490.5h1M415.5 487V492M414 487.5h1M416 490.5h1M421.5 479V492M420 491.5h1M422 479.5h1M427.5 472V481M426 480.5h1M428 478.5h1M433.5 476V485M432 476.5h1M434 482.5h1M438.5 479V489M437 479.5h1M439 488.5h1M444.5 488V494M443 488.5h1M445 493.5h1M450.5 489V494M449 493.5h1M451 490.5h1M455.5 489V494M454 493.5h1M456 489.5h1M461.5 489V492M460 489.5h1M462 491.5h1M467.5 491V493M466 492.5h1M468 491.5h1M472.5 484V491M471 490.5h1M473 486.5h1M478.5 484V488M477 484.5h1M479 487.5h1M484.5 485V489M483 488.5h1M485 488.5h1M490.5 482V487M489 486.5h1M491 484.5h1M495.5 484V487M494 485.5h1M496 485.5h1M501.5 482V486M500 485.5h1M502 482.5h1M507.5 477V482M506 481.5h1M508 479.5h1M513.5 478V482M512 479.5h1M514 479.5h1M518.5 476V480M517 479.5h1M519 478.5h1M524.5 474V478M523 477.5h1M525 474.5h1M530.5 475V478M529 476.5h1M531 476.5h1M535.5 474V479M534 475.5h1M536 475.5h1M541.5 461V475M540 474.5h1M542 461.5h1M547.5 439V458M546 455.5h1M548 442.5h1M552.5 417V437M551 436.5h1M553 417.5h1M558.5 402V415M557 413.5h1M559 411.5h1M563.5 413V425M562 414.5h1M564 420.5h1M569.5 419V429M568 420.5h1M570 422.5h1M575.5 422V428M574 423.5h1M576 427.5h1M580.5 425V429M579 428.5h1M581 427.5h1M586.5 415V427M585 426.5h1M587 415.5h1M592.5 405V412M591 411.5h1M593 410.5h1M598.5 409V421M597 409.5h1M599 420.5h1M603.5 415V420M602 418.5h1M604 416.5h1M609.5 414V418M608 417.5h1M610 417.5h1M615.5 415V420M614 419.5h1M616 415.5h1M620.5 412V416M619 415.5h1M621 415.5h1M626.5 413V417M625 415.5h1M627 416.5h1M632.5 368V415M631 414.5h1M633 370.5h1M637.5 337V361M636 357.5h1M638 360.5h1M643.5 359V382M642 359.5h1M644 377.5h1M649.5 367V386M648 381.5h1M650 367.5h1M654.5 349V365M653 364.5h1M655 351.5h1M660.5 343V355M659 350.5h1M661 354.5h1M666.5 355V361M665 355.5h1M667 358.5h1M672.5 353V358M671 357.5h1M673 356.5h1M677.5 355V358M676 355.5h1M678 357.5h1M683.5 358V374M682 358.5h1M684 365.5h1M689.5 367V386M688 374.5h1M690 377.5h1M694.5 364V381M693 380.5h1M695 364.5h1M700.5 357V375M699 362.5h1M701 372.5h1M706.5 372V382M705 372.5h1M707 381.5h1M711.5 372V392M710 381.5h1M712 384.5h1M717.5 384V410M716 384.5h1M718 409.5h1M723.5 384V422M722 412.5h1M724 384.5h1M728.5 379V395M727 384.5h1M729 393.5h1M734.5 381V391M733 390.5h1M735 387.5h1M740.5 383V387M739 383.5h1M741 386.5h1M746.5 383V389M745 384.5h1M747 388.5h1M752.5 386V392M751 386.5h1M753 391.5h1M757.5 391V399M756 392.5h1M758 392.5h1M763.5 386V394M762 393.5h1M764 387.5h1M768.5 384V391M767 384.5h1M769 390.5h1M774.5 358V390M773 389.5h1M775 360.5h1M780.5 358V376M779 367.5h1M781 375.5h1M785.5 355V374M784 373.5h1M786 364.5h1M791.5 362V372M790 370.5h1M792 370.5h1M797.5 313V350M796 343.5h1M798 336.5h1M802.5 327V344M801 332.5h1M803 339.5h1M808.5 348V360M807 348.5h1M809 359.5h1M814.5 357V372M813 357.5h1M815 362.5h1M820.5 348V362M819 348.5h1M821 360.5h1M825.5 353V362M824 360.5h1M826 357.5h1M831.5 357V363M830 357.5h1M832 360.5h1M837.5 359V365M836 359.5h1M838 364.5h1M842.5 358V365M841 361.5h1M843 364.5h1M848.5 364V366M847 364.5h1M849 365.5h1M854.5 364V368M853 365.5h1M855 367.5h1M859.5 364V370M858 364.5h1M860 369.5h1M865.5 367V369M864 368.5h1M866 367.5h1M871.5 365V368M870 367.5h1M872 367.5h1M876.5 355V366M875 365.5h1M877 362.5h1M882.5 358V364M881 360.5h1M883 360.5h1M888.5 359V364M887 360.5h1M889 361.5h1M893.5 358V364M892 360.5h1M894 360.5h1M899.5 355V358M898 357.5h1M900 357.5h1M905.5 360V364M904 360.5h1M906 363.5h1" stroke="#000"/><path d="M34.5 640V569M40.5 640V591M46.5 640V617M51.5 640V633M57.5 640V637M63.5 640V629M68.5 640V628M74.5 640V633M80.5 640V630M85.5 640V631M91.5 640V623M96.5 640V636M102.5 640V633M108.5 640V636M114.5 640V639M120.5 640V635M125.5 640V592M131.5 640V609M136.5 640V631M142.5 640V626M148.5 640V626M154.5 640V629M159.5 640V637M165.5 640V637M171.5 640V639M176.5 640V638M182.5 640V638M188.5 640V638M194.5 640V637M199.5 640V633M205.5 640V629M211.5 640V625M216.5 640V637M222.5 640V627M228.5 640V621M233.5 640V606M239.5 640V615M245.5 640V599M250.5 640V624M256.5 640V637M262.5 640V636M268.5 640V639M273.5 640V635M279.5 640V639M285.5 640V639M290.5 640V639M296.5 640V622M308.5 640V639M313.5 640V633M319.5 640V635M325.5 640V634M330.5 640V639M336.5 640V638M341.5 640V636M347.5 640V638M353.5 640V638M359.5 640V636M365.5 640V637M370.5 640V606M376.5 640V620M381.5 640V624M387.5 640V639M393.5 640V638M398.5 640V637M404.5 640V639M410.5 640V589M415.5 640V622M421.5 640V583M427.5 640V599M433.5 640V629M438.5 640V617M444.5 640V627M450.5 640V636M455.5 640V631M461.5 640V637M467.5 640V636M472.5 640V619M478.5 640V639M484.5 640V637M490.5 640V621M495.5 640V636M501.5 640V634M507.5 640V624M513.5 640V629M518.5 640V617M524.5 640V624M530.5 640V634M535.5 640V636M541.5 640V584M547.5 640V565M552.5 640V593M558.5 640V587M563.5 640V624M569.5 640V631M575.5 640V633M586.5 640V628M592.5 640V627M598.5 640V631M603.5 640V639M609.5 640V639M620.5 640V638M626.5 640V635M632.5 640V576M637.5 640V612M643.5 640V626M649.5 640V631M654.5 640V616M660.5 640V628M666.5 640V636M672.5 640V638M683.5 640V633M689.5 640V630M694.5 640V638M700.5 640V633M706.5 640V637M711.5 640V633M717.5 640V630M723.5 640V619M728.5 640V628M734.5 640V636M740.5 640V635M746.5 640V639M752.5 640V638M757.5 640V638M763.5 640V637M768.5 640V637M774.5 640V607M780.5 640V627M785.5 640V615M791.5 640V633M797.5 640V590M802.5 640V628M808.5 640V632M814.5 640V637M820.5 640V635M825.5 640V637M831.5 640V638M837.5 640V636M842.5 640V634M848.5 640V639M871.5 640V639M876.5 640V635M882.5 640V637M888.5 640V638M893.5 640V637M899.5 640V639" stroke="#10108c"/><path d="M32 640.500H972M32 656.500H972M57.5 640V656M85.5 640V656M114.5 640V656M142.5 640V656M165.5 640V656M194.5 640V656M222.5 640V656M250.5 640V656M279.5 640V656M308.5 640V656M336.5 640V656M365.5 640V656M393.5 640V656M421.5 640V656M450.5 640V656M478.5 640V656M507.5 640V656M535.5 640V656M563.5 640V656M586.5 640V656M609.5 640V656M637.5 640V656M660.5 640V656M689.5 640V656M717.5 640V656M746.5 640V656M774.5 640V656M802.5 640V656M825.5 640V656M854.5 640V656M882.5 640V656M911.5 640V656M939.5 640V656M968.5 640V656M46.5 640V672M165.5 656V672M290.5 656V672M404.5 656V672M535.5 656V672M637.5 656V672M763.5 656V672M882.5 656V672" stroke="#000"/></g></svg>
<div class="" style="left:972px;top:640px;width:50px;height:33px;background:#d4d0c8;border-left:1px solid #fff;border-top:2px solid #f4f3f0"></div>
<div class="" style="left:973px;top:627px;width:24px;height:14px;background:#fff;border:1px solid #000"></div>
<div class="t " style="left:975.00px;top:627.13px;font-size:10px;line-height:14px;letter-spacing:-0.394px;">x100</div>
<div class="t " style="left:1004.00px;top:254.44px;font-size:12px;line-height:16px;letter-spacing:0.33px;">10</div>
<div class="t " style="left:1004.00px;top:238.44px;font-size:12px;line-height:16px;letter-spacing:0.33px;">20</div>
<div class="t " style="left:1004.00px;top:221.44px;font-size:12px;line-height:16px;letter-spacing:0.33px;">30</div>
<div class="t " style="left:1004.00px;top:205.44px;font-size:12px;line-height:16px;letter-spacing:0.33px;">40</div>
<div class="t " style="left:1004.00px;top:188.44px;font-size:12px;line-height:16px;letter-spacing:0.33px;">50</div>
<div class="t " style="left:1004.00px;top:172.44px;font-size:12px;line-height:16px;letter-spacing:0.33px;">60</div>
<div class="t " style="left:1004.00px;top:155.44px;font-size:12px;line-height:16px;letter-spacing:0.33px;">70</div>
<div class="t " style="left:1004.00px;top:139.44px;font-size:12px;line-height:16px;letter-spacing:0.33px;">80</div>
<div class="t " style="left:1004.00px;top:122.44px;font-size:12px;line-height:16px;letter-spacing:0.33px;">90</div>
<div class="t " style="left:1001.00px;top:541.44px;font-size:12px;line-height:16px;letter-spacing:0.33px;">1.2</div>
<div class="t " style="left:1001.00px;top:524.44px;font-size:12px;line-height:16px;letter-spacing:0.33px;">1.3</div>
<div class="t " style="left:1001.00px;top:506.44px;font-size:12px;line-height:16px;letter-spacing:0.33px;">1.4</div>
<div class="t " style="left:1001.00px;top:489.44px;font-size:12px;line-height:16px;letter-spacing:0.33px;">1.5</div>
<div class="t " style="left:1001.00px;top:472.44px;font-size:12px;line-height:16px;letter-spacing:0.33px;">1.6</div>
<div class="t " style="left:1001.00px;top:455.44px;font-size:12px;line-height:16px;letter-spacing:0.33px;">1.7</div>
<div class="t " style="left:1001.00px;top:437.44px;font-size:12px;line-height:16px;letter-spacing:0.33px;">1.8</div>
<div class="t " style="left:1001.00px;top:420.44px;font-size:12px;line-height:16px;letter-spacing:0.33px;">1.9</div>
<div class="t " style="left:1001.00px;top:403.44px;font-size:12px;line-height:16px;letter-spacing:0.33px;">2.0</div>
<div class="t " style="left:1001.00px;top:385.44px;font-size:12px;line-height:16px;letter-spacing:0.33px;">2.1</div>
<div class="t " style="left:1001.00px;top:368.44px;font-size:12px;line-height:16px;letter-spacing:0.33px;">2.2</div>
<div class="t " style="left:1001.00px;top:351.44px;font-size:12px;line-height:16px;letter-spacing:0.33px;">2.3</div>
<div class="t " style="left:1001.00px;top:334.44px;font-size:12px;line-height:16px;letter-spacing:0.33px;">2.4</div>
<div class="t " style="left:1001.00px;top:316.44px;font-size:12px;line-height:16px;letter-spacing:0.33px;">2.5</div>
<div class="t " style="left:1001.00px;top:299.44px;font-size:12px;line-height:16px;letter-spacing:0.33px;">2.6</div>
<div class="t " style="left:983.50px;top:585.44px;font-size:12px;line-height:16px;letter-spacing:0.33px;">50000</div>
<div class="" style="left:32px;top:642px;width:20px;height:14px;overflow:hidden"><div class="t" style="left:-0.8px;top:-0.5px;font-size:12px;line-height:16px;letter-spacing:0.33px">28</div></div>
<div class="t " style="left:59.50px;top:641.44px;font-size:12px;line-height:16px;letter-spacing:0.33px;">5</div>
<div class="t " style="left:87.50px;top:641.44px;font-size:12px;line-height:16px;letter-spacing:0.33px;">12</div>
<div class="t " style="left:116.50px;top:641.44px;font-size:12px;line-height:16px;letter-spacing:0.33px;">19</div>
<div class="t " style="left:144.50px;top:641.44px;font-size:12px;line-height:16px;letter-spacing:0.33px;">27</div>
<div class="t " style="left:167.50px;top:641.44px;font-size:12px;line-height:16px;letter-spacing:0.33px;">2</div>
<div class="t " style="left:196.50px;top:641.44px;font-size:12px;line-height:16px;letter-spacing:0.33px;">9</div>
<div class="t " style="left:224.50px;top:641.44px;font-size:12px;line-height:16px;letter-spacing:0.33px;">16</div>
<div class="t " style="left:252.50px;top:641.44px;font-size:12px;line-height:16px;letter-spacing:0.33px;">23</div>
<div class="t " style="left:281.50px;top:641.44px;font-size:12px;line-height:16px;letter-spacing:0.33px;">30</div>
<div class="t " style="left:310.50px;top:641.44px;font-size:12px;line-height:16px;letter-spacing:0.33px;">6</div>
<div class="t " style="left:338.50px;top:641.44px;font-size:12px;line-height:16px;letter-spacing:0.33px;">13</div>
<div class="t " style="left:367.50px;top:641.44px;font-size:12px;line-height:16px;letter-spacing:0.33px;">20</div>
<div class="t " style="left:395.50px;top:641.44px;font-size:12px;line-height:16px;letter-spacing:0.33px;">27</div>
<div class="t " style="left:423.50px;top:641.44px;font-size:12px;line-height:16px;letter-spacing:0.33px;">6</div>
<div class="t " style="left:452.50px;top:641.44px;font-size:12px;line-height:16px;letter-spacing:0.33px;">13</div>
<div class="t " style="left:480.50px;top:641.44px;font-size:12px;line-height:16px;letter-spacing:0.33px;">20</div>
<div class="t " style="left:509.50px;top:641.44px;font-size:12px;line-height:16px;letter-spacing:0.33px;">27</div>
<div class="t " style="left:537.50px;top:641.44px;font-size:12px;line-height:16px;letter-spacing:0.33px;">3</div>
<div class="t " style="left:565.50px;top:641.44px;font-size:12px;line-height:16px;letter-spacing:0.33px;">10</div>
<div class="t " style="left:588.50px;top:641.44px;font-size:12px;line-height:16px;letter-spacing:0.33px;">18</div>
<div class="t " style="left:611.50px;top:641.44px;font-size:12px;line-height:16px;letter-spacing:0.33px;">24</div>
<div class="t " style="left:639.50px;top:641.44px;font-size:12px;line-height:16px;letter-spacing:0.33px;">2</div>
<div class="t " style="left:662.50px;top:641.44px;font-size:12px;line-height:16px;letter-spacing:0.33px;">8</div>
<div class="t " style="left:691.50px;top:641.44px;font-size:12px;line-height:16px;letter-spacing:0.33px;">15</div>
<div class="t " style="left:719.50px;top:641.44px;font-size:12px;line-height:16px;letter-spacing:0.33px;">22</div>
<div class="t " style="left:748.50px;top:641.44px;font-size:12px;line-height:16px;letter-spacing:0.33px;">29</div>
<div class="t " style="left:776.50px;top:641.44px;font-size:12px;line-height:16px;letter-spacing:0.33px;">5</div>
<div class="t " style="left:804.50px;top:641.44px;font-size:12px;line-height:16px;letter-spacing:0.33px;">12</div>
<div class="t " style="left:827.50px;top:641.44px;font-size:12px;line-height:16px;letter-spacing:0.33px;">19</div>
<div class="t " style="left:856.50px;top:641.44px;font-size:12px;line-height:16px;letter-spacing:0.33px;">26</div>
<div class="t " style="left:884.50px;top:641.44px;font-size:12px;line-height:16px;letter-spacing:0.33px;">3</div>
<div class="t " style="left:913.50px;top:641.44px;font-size:12px;line-height:16px;letter-spacing:0.33px;">10</div>
<div class="t " style="left:941.50px;top:641.44px;font-size:12px;line-height:16px;letter-spacing:0.33px;">17</div>
<div class="" style="left:969px;top:642px;width:3px;height:14px;overflow:hidden"><div class="t" style="left:1px;top:-0.5px;font-size:12px;line-height:16px">2</div></div>
<div class="t " style="left:48.00px;top:657.44px;font-size:12px;line-height:16px;letter-spacing:0.33px;">December</div>
<div class="t " style="left:167.00px;top:657.44px;font-size:12px;line-height:16px;letter-spacing:0.33px;">2006</div>
<div class="t " style="left:292.00px;top:657.44px;font-size:12px;line-height:16px;letter-spacing:0.33px;">February</div>
<div class="t " style="left:406.00px;top:657.44px;font-size:12px;line-height:16px;letter-spacing:0.33px;">March</div>
<div class="t " style="left:537.00px;top:657.44px;font-size:12px;line-height:16px;letter-spacing:0.33px;">April</div>
<div class="t " style="left:639.00px;top:657.44px;font-size:12px;line-height:16px;letter-spacing:0.33px;">May</div>
<div class="t " style="left:765.00px;top:657.44px;font-size:12px;line-height:16px;letter-spacing:0.33px;">June</div>
<div class="t " style="left:884.00px;top:657.44px;font-size:12px;line-height:16px;letter-spacing:0.33px;">July</div>
<div class="chk" style="left:31px;top:674px;width:804px;height:17px;"></div>
<div class="r" style="left:31px;top:674px;width:15px;height:17px;"></div>
<svg class="a" style="left:31px;top:674px;" width="15" height="17" viewBox="0 0 15 17"><path d="M8.500 5v7l-4-3.500z" fill="#000"/></svg>
<div class="r" style="left:471px;top:674px;width:364px;height:17px;"></div>
<div class="r" style="left:835px;top:674px;width:15px;height:17px;"></div>
<svg class="a" style="left:835px;top:674px;" width="15" height="17" viewBox="0 0 15 17"><path d="M6 5v7l4-3.500z" fill="#000"/></svg>
<div class="vs" style="left:853px;top:675px;width:2px;height:16px;"></div>
<div class="vs" style="left:893px;top:675px;width:2px;height:16px;"></div>
<div class="vs" style="left:967px;top:675px;width:2px;height:16px;"></div>
<svg class="a" style="left:861px;top:677px;" width="8" height="12" viewBox="0 0 8 12"><path d="M1.500 5v-1.500c0-1.500 1-2 2.500-2h1.500M6.500 7v1.500c0 1.500-1 2-2.500 2h-1.500" fill="none" stroke="#000" stroke-width="1.600"/><path d="M5 0l2.500 1.500-2.500 1.500zM3 9l-2.500 1.500 2.500 1.500z" fill="#000"/></svg>
<div class="t " style="left:877.50px;top:675.44px;font-size:12px;line-height:16px;font-weight:bold;font-family:'Liberation Serif',serif;">D</div>
<svg class="a" style="left:901px;top:677px;" width="8" height="12" viewBox="0 0 8 12"><path d="M4 0l3.500 4h-7zM4 12l3.500-4h-7zM3 3h2v6h-2z" fill="#000"/></svg>
<svg class="a" style="left:918px;top:677px;" width="10" height="12" viewBox="0 0 10 12"><path d="M5 1v10M0.500 6h9" stroke="#000" stroke-width="1.200"/><path d="M5 0l2 2.500h-4zM5 12l2-2.500h-4zM0 6l2.500-2v4zM10 6l-2.500-2v4z" fill="#000"/></svg>
<svg class="a" style="left:934px;top:677px;" width="11" height="11" viewBox="0 0 11 11"><circle cx="5.500" cy="5.500" r="4.300" fill="none" stroke="#000" stroke-width="1.300"/><path d="M3 5.500h5" stroke="#000" stroke-width="1.500"/></svg>
<svg class="a" style="left:951px;top:677px;" width="11" height="11" viewBox="0 0 11 11"><circle cx="5.500" cy="5.500" r="4.300" fill="none" stroke="#000" stroke-width="1.300"/><path d="M3 5.500h5M5.500 3v5" stroke="#000" stroke-width="1.500"/></svg>
<svg class="a" style="left:975px;top:677px;" width="7" height="12" viewBox="0 0 7 12"><path d="M6.500 1v10l-6-5z" fill="#000"/></svg>
<svg class="a" style="left:993px;top:677px;" width="7" height="12" viewBox="0 0 7 12"><path d="M0.500 1v10l6-5z" fill="#000"/></svg>
<svg class="a" style="left:1008px;top:677px;" width="10" height="11" viewBox="0 0 10 11"><rect x="1" y="0.500" width="7.500" height="9.500" fill="#fff" stroke="#000"/><path d="M1 2.500h7.500M3 5h4M3 7h4" stroke="#000"/><path d="M0.500 0.500h8.500" stroke="#000" stroke-width="1.500"/></svg>
<div class="" style="left:0px;top:691px;width:852px;height:1px;background:#fff"></div>
<div class="" style="left:0px;top:690px;width:31px;height:1px;background:#808080"></div>
<div class="gr" style="left:2px;top:695px;width:3px;height:21px;"></div>
<div class="s" style="left:13px;top:696.5px;width:128px;height:19px;background:#fff"></div>
<div class="r" style="left:123px;top:698.5px;width:16px;height:15px;"></div>
<svg class="a" style="left:123px;top:698.5px;" width="16" height="15" viewBox="0 0 16 15"><path d="M4.500 6h7l-3.500 4z" fill="#000"/></svg>
<div class="" style="left:29px;top:706px;width:82px;height:1px;background:#000"></div>
<div class="s" style="left:149px;top:696.5px;width:99px;height:19px;background:#fff"></div>
<div class="r" style="left:230px;top:698.5px;width:16px;height:15px;"></div>
<svg class="a" style="left:230px;top:698.5px;" width="16" height="15" viewBox="0 0 16 15"><path d="M4.500 6h7l-3.500 4z" fill="#000"/></svg>
<div class="" style="left:161px;top:706px;width:60px;height:1px;background:#000"></div>
<div class="vs" style="left:255px;top:695px;width:2px;height:21px;"></div>
<div class="gr" style="left:259px;top:695px;width:3px;height:21px;"></div>
<div class="" style="left:273px;top:698px;width:8px;height:7px;background:#000;box-shadow:-1px -1px 0 #808080,1px 1px 0 #fff"></div>
<div class="" style="left:283px;top:698px;width:8px;height:7px;background:#0000ff;box-shadow:-1px -1px 0 #808080,1px 1px 0 #fff"></div>
<div class="" style="left:293px;top:698px;width:8px;height:7px;background:#00ffff;box-shadow:-1px -1px 0 #808080,1px 1px 0 #fff"></div>
<div class="" style="left:304px;top:698px;width:8px;height:7px;background:#00ff00;box-shadow:-1px -1px 0 #808080,1px 1px 0 #fff"></div>
<div class="" style="left:314px;top:698px;width:8px;height:7px;background:#ff00ff;box-shadow:-1px -1px 0 #808080,1px 1px 0 #fff"></div>
<div class="" style="left:324px;top:698px;width:8px;height:7px;background:#ff0000;box-shadow:-1px -1px 0 #808080,1px 1px 0 #fff"></div>
<div class="" style="left:334px;top:698px;width:8px;height:7px;background:#ffff00;box-shadow:-1px -1px 0 #808080,1px 1px 0 #fff"></div>
<div class="" style="left:345px;top:698px;width:8px;height:7px;background:#fff;box-shadow:-1px -1px 0 #808080,1px 1px 0 #fff"></div>
<div class="" style="left:273px;top:708px;width:8px;height:7px;background:#000080;box-shadow:-1px -1px 0 #808080,1px 1px 0 #fff"></div>
<div class="" style="left:283px;top:708px;width:8px;height:7px;background:#008080;box-shadow:-1px -1px 0 #808080,1px 1px 0 #fff"></div>
<div class="" style="left:293px;top:708px;width:8px;height:7px;background:#008000;box-shadow:-1px -1px 0 #808080,1px 1px 0 #fff"></div>
<div class="" style="left:304px;top:708px;width:8px;height:7px;background:#800080;box-shadow:-1px -1px 0 #808080,1px 1px 0 #fff"></div>
<div class="" style="left:314px;top:708px;width:8px;height:7px;background:#800000;box-shadow:-1px -1px 0 #808080,1px 1px 0 #fff"></div>
<div class="" style="left:324px;top:708px;width:8px;height:7px;background:#808000;box-shadow:-1px -1px 0 #808080,1px 1px 0 #fff"></div>
<div class="" style="left:334px;top:708px;width:8px;height:7px;background:#808080;box-shadow:-1px -1px 0 #808080,1px 1px 0 #fff"></div>
<div class="" style="left:345px;top:708px;width:8px;height:7px;background:#c0c0c0;box-shadow:-1px -1px 0 #808080,1px 1px 0 #fff"></div>
<div class="" style="left:322px;top:696px;width:12px;height:11px;border:1px dotted #fff"></div>
<svg class="a" style="left:357px;top:705px;" width="5" height="3" viewBox="0 0 5 3"><path d="M0 0h5l-2.500 3z" fill="#000"/></svg>
<div class="vs" style="left:372px;top:695px;width:2px;height:21px;"></div>
<div class="gr" style="left:376px;top:695px;width:3px;height:21px;"></div>
<svg class="a" style="left:393.5px;top:698px;" width="13" height="15" viewBox="0 0 13 15"><path d="M0.500 0.500h8.500l3.500 3.500v10.500h-12z" fill="#dce8f8" stroke="#6088c0"/><circle cx="6" cy="8.500" r="3.600" fill="#e06820"/><path d="M3.500 8a2.500 2.500 0 0 1 5 0z" fill="#3868c0"/></svg>
<svg class="a" style="left:417.5px;top:698px;" width="13" height="15" viewBox="0 0 13 15"><path d="M0.500 0.500h8.500l3.500 3.500v10.500h-12z" fill="#dce8f8" stroke="#6088c0"/><circle cx="6" cy="8.500" r="3.600" fill="#e06820"/><path d="M3.500 8a2.500 2.500 0 0 1 5 0z" fill="#3868c0"/></svg>
<svg class="a" style="left:441px;top:698px;" width="14" height="14" viewBox="0 0 14 14"><path d="M0.500 12.500v-9h5M9.500 3.500h3v9z M0.500 12.500h12" fill="#fff" stroke="#000"/><rect x="0.500" y="3.500" width="12" height="9" fill="#fff" stroke="#000"/><path d="M2 11l6-4" stroke="#c00000" stroke-width="1.200"/></svg>
<div class="t " style="left:446.50px;top:697.13px;font-size:10px;line-height:14px;background:#d4d0c8;line-height:9px;">1</div>
<svg class="a" style="left:465px;top:698px;" width="14" height="14" viewBox="0 0 14 14"><path d="M0.500 12.500v-9h5M9.500 3.500h3v9z M0.500 12.500h12" fill="#fff" stroke="#000"/><rect x="0.500" y="3.500" width="12" height="9" fill="#fff" stroke="#000"/><path d="M2 11l6-4" stroke="#c00000" stroke-width="1.200"/></svg>
<div class="t " style="left:470.50px;top:697.13px;font-size:10px;line-height:14px;background:#d4d0c8;line-height:9px;">2</div>
<svg class="a" style="left:489px;top:699px;" width="13" height="13" viewBox="0 0 13 13"><rect x="0.500" y="0.500" width="12" height="12" fill="#fff" stroke="#000"/><rect x="0" y="0" width="13" height="4" fill="#d4d0c8" stroke="#808080" stroke-width=".6"/><rect x="0" y="4.500" width="13" height="2.500" fill="#000080"/></svg>
<svg class="a" style="left:513.5px;top:699px;" width="13" height="13" viewBox="0 0 13 13"><rect x="0.500" y="0.500" width="12" height="12" fill="#fff" stroke="#000"/><rect x="0" y="0" width="13" height="4" fill="#d4d0c8" stroke="#808080" stroke-width=".6"/><rect x="0" y="4.500" width="13" height="2.500" fill="#000080"/></svg>
<svg class="a" style="left:537px;top:699px;" width="13" height="13" viewBox="0 0 13 13"><rect x="0.500" y="0.500" width="12" height="12" fill="#fff" stroke="#000"/><rect x="0" y="0" width="13" height="4" fill="#d4d0c8" stroke="#808080" stroke-width=".6"/><rect x="0" y="4.500" width="13" height="2.500" fill="#000080"/></svg>
<div class="vs" style="left:561px;top:695px;width:2px;height:21px;"></div>
<div class="gr" style="left:564.5px;top:695px;width:3px;height:21px;"></div>
<div class="s" style="left:576.5px;top:696.5px;width:62px;height:18px;"></div>
<div class="t " style="left:579.50px;top:697.94px;font-size:12px;line-height:16px;letter-spacing:-0.927px;">ALTR</div>
<div class="s" style="left:647px;top:696.5px;width:78px;height:19px;background:#fff"></div>
<div class="r" style="left:707px;top:698.5px;width:16px;height:15px;"></div>
<svg class="a" style="left:707px;top:698.5px;" width="16" height="15" viewBox="0 0 16 15"><path d="M4.500 6h7l-3.500 4z" fill="#000"/></svg>
<div class="s" style="left:733px;top:696.5px;width:148px;height:19px;background:#fff"></div>
<div class="r" style="left:863px;top:698.5px;width:16px;height:15px;"></div>
<svg class="a" style="left:863px;top:698.5px;" width="16" height="15" viewBox="0 0 16 15"><path d="M4.500 6h7l-3.500 4z" fill="#000"/></svg>
<div class="t " style="left:737.00px;top:698.44px;font-size:12px;line-height:16px;letter-spacing:-0.822px;">&lt;No Vendor&gt;</div>
<div class="r" style="left:888.5px;top:695px;width:65.5px;height:21.5px;"></div>
<div class="t " style="left:908.00px;top:698.44px;font-size:12px;line-height:16px;color:#fff;letter-spacing:-0.850px;margin:1px 0 0 1px;">Trade</div>
<div class="t " style="left:908.00px;top:698.44px;font-size:12px;line-height:16px;color:#808080;letter-spacing:-0.850px;">Trade</div>
<div class="vs" style="left:961px;top:694px;width:2px;height:23px;"></div>
<div class="" style="left:0px;top:718px;width:1024px;height:1px;background:#808080"></div>
<div class="" style="left:0px;top:719px;width:1024px;height:1px;background:#fff"></div>
<div class="t " style="left:0.50px;top:722.79px;font-size:11px;line-height:15px;letter-spacing:-0.210px;">For Help, press F1</div>
<div class="s1" style="left:707px;top:722px;width:64px;height:15.5px;"></div>
<div class="s1" style="left:774.5px;top:722px;width:54.5px;height:15.5px;"></div>
<div class="s1" style="left:832px;top:722px;width:69px;height:15.5px;"></div>
<div class="s1" style="left:904px;top:722px;width:23px;height:15.5px;"></div>
<div class="s1" style="left:930px;top:722px;width:39.5px;height:15.5px;"></div>
<div class="s1" style="left:972.5px;top:722px;width:21px;height:15.5px;"></div>
<div class="s1" style="left:996px;top:722px;width:28px;height:15.5px;"></div>
<div class="t " style="left:709.50px;top:722.79px;font-size:11px;line-height:15px;letter-spacing:-0.085px;">12-07-2006</div>
<div class="t " style="left:834.00px;top:722.79px;font-size:11px;line-height:15px;letter-spacing:0.040px;">2.16784</div>
<div class="t " style="left:932.00px;top:722.79px;font-size:11px;line-height:15px;letter-spacing:-0.006px;">16:34</div>
<div class="t " style="left:978.50px;top:722.94px;font-size:12px;line-height:16px;font-weight:bold;color:#008000;">$</div>
<div class="" style="left:0px;top:739px;width:1024px;height:1px;background:#fff"></div>
<div class="r" style="left:2px;top:742px;width:59px;height:22px;"></div>
<svg class="a" style="left:3.5px;top:745px;" width="16" height="14" viewBox="0 0 16 14"><path d="M1 2.500c2-1.500 4-1.500 6 0l-1 4.500c-2-1.500-4-1.500-6 0z" fill="#e86030"/><path d="M8 3c2 1.500 4 1.500 6 0l-1 4.500c-2 1.500-4 1.500-6 0z" fill="#70b030"/><path d="M0 8c2-1.500 4-1.500 6 0l-1 4.500c-2-1.500-4-1.500-6 0z" fill="#4080e0"/><path d="M7 8.500c2 1.500 4 1.500 6 0l-1 4.500c-2 1.500-4 1.500-6 0z" fill="#e8c830"/></svg>
<div class="t " style="left:21.50px;top:745.79px;font-size:11px;line-height:15px;font-weight:bold;letter-spacing:0.516px;-webkit-text-stroke:0.3px #000;">Iniciar</div>
<svg class="a" style="left:68px;top:745px;" width="18" height="17" viewBox="0 0 18 17"><circle cx="9" cy="9" r="6.800" fill="#2f8fe6"/><path d="M5.800 9.200H12.200A3.200 3.200 0 0 0 5.800 9.200A3.200 3.200 0 0 0 11.400 11.600" fill="none" stroke="#fff" stroke-width="1.700"/><path d="M2 12.500c-2.500 4.500 3 4 9.500-1.500c5-4.500 6.500-9.500-.5-7" fill="none" stroke="#7cc0f8" stroke-width="1.200"/></svg>
<svg class="a" style="left:91px;top:745px;" width="17" height="17" viewBox="0 0 17 17"><rect x="1" y="2" width="13" height="13" rx="2" fill="#fff" stroke="#2868b0" stroke-width="1.800"/><path d="M11 6a3.500 3.500 0 1 0 0 5M7.500 8.500h4" fill="none" stroke="#2868b0" stroke-width="1.800"/><path d="M11 1.500l5 2-3 3z" fill="#e04030"/></svg>
<svg class="a" style="left:115px;top:745px;" width="17" height="17" viewBox="0 0 16 16"><circle cx="8" cy="8" r="7.500" fill="#e87818"/><circle cx="8.500" cy="7" r="4.500" fill="#3858b8"/><path d="M3 5c1 5 5 7 9 6c-2 4-9 4-11-1c-1-3 0-5 2-5z" fill="#f0a020"/><path d="M1 3c0 3 2 4 4 4l1-3z" fill="#c85010"/></svg>
<div class="t " style="left:142.50px;top:740.60px;font-size:13px;line-height:17px;font-weight:bold;">»</div>
<div class="r" style="left:155px;top:742px;width:159px;height:22px;"></div>
<svg class="a" style="left:159.5px;top:745px;" width="16" height="16" viewBox="0 0 16 16"><circle cx="8" cy="8" r="7.500" fill="#e87818"/><circle cx="8.500" cy="7" r="4.500" fill="#3858b8"/><path d="M3 5c1 5 5 7 9 6c-2 4-9 4-11-1c-1-3 0-5 2-5z" fill="#f0a020"/><path d="M1 3c0 3 2 4 4 4l1-3z" fill="#c85010"/></svg>
<div class="t " style="left:178.50px;top:746.29px;font-size:11px;line-height:15px;letter-spacing:-0.321px;">CALDEIRÃO DE BOLSA ::...</div>
<div class="chk" style="left:317px;top:742px;width:161px;height:22px;border:1px solid;border-color:#404040 #fff #fff #404040;box-shadow:inset 1px 1px 0 #808080"></div>
<svg class="a" style="left:322.5px;top:744.5px;" width="18" height="18" viewBox="0 0 16 16"><ellipse cx="8" cy="9.500" rx="5.500" ry="4" fill="#08080c"/><path d="M3 7l-2.500-2M3 11l-3 2.500M5 13l-1 2.500M11 13l1.500 2.500M13 11l2.500 2M13.500 8l2-1.500M4 8l-3.500 1M12.500 9.500l3 .5" stroke="#08080c" stroke-width="1.100" fill="none"/>
<path d="M5 9h1.500M8 10.500h1.500M6.500 11.500h1" stroke="#58b8b0" stroke-width="1"/><path d="M10.500 8.500h1.500M11 10h1" stroke="#fff" stroke-width="1"/>
<text x="0.500" y="7.500" font-family="Liberation Sans,sans-serif" font-weight="bold" font-size="9" fill="#e8102c" textLength="15" lengthAdjust="spacingAndGlyphs">MS</text></svg>
<div class="t " style="left:342.50px;top:746.29px;font-size:11px;line-height:15px;font-weight:bold;letter-spacing:0.360px;-webkit-text-stroke:0.25px #000;">MetaStock Profession...</div>
<div class="" style="left:860px;top:745.5px;width:16px;height:17px;background:#0a246a"></div>
<div class="t " style="left:862.00px;top:747.29px;font-size:11px;line-height:15px;color:#fff;letter-spacing:-1.556px;">PT</div>
<div class="vs" style="left:880px;top:743px;width:2px;height:21px;"></div>
<div class="s1" style="left:891px;top:742px;width:130px;height:23px;"></div>
<div class="t " style="left:895.50px;top:745.44px;font-size:12px;line-height:16px;font-weight:bold;">«</div>
<svg class="a" style="left:909px;top:746px;" width="14" height="16" viewBox="0 0 14 16"><path d="M1 15.500l1-9 2-5.500 3 3 3-3 2 5.500 1 9z" fill="#d87020" stroke="#804010" stroke-width=".6"/><rect x="3" y="6.500" width="8" height="3" fill="#000"/><circle cx="10.500" cy="12.500" r="2.500" fill="#fff" stroke="#000" stroke-width=".8"/></svg>
<svg class="a" style="left:926px;top:745px;" width="17" height="17" viewBox="0 0 17 17"><rect x="2" y="6" width="8" height="7" fill="#60a8f0" stroke="#2060c0"/><path d="M4 15.500h5M6.500 13v2.500" stroke="#2060c0" stroke-width="1.500"/><path d="M11 7c1.500-1.500 1.500-3.500 0-5M13 8.500c2.500-2.500 2.500-6 0-8.500M15 10c3-3.500 3-8.500 0-11" fill="none" stroke="#30c020" stroke-width="1.200"/></svg>
<svg class="a" style="left:944px;top:745px;" width="18" height="18" viewBox="0 0 18 18"><circle cx="5.500" cy="4.500" r="3" fill="#50a0e8"/><path d="M0.500 12.500c0-4 2-5 5-5s4.500 1 4.500 5z" fill="#50a0e8"/><circle cx="12" cy="5.500" r="3" fill="#50c050"/><path d="M7.500 13.500c0-4 2-5 4.500-5s4.500 1 4.500 5z" fill="#50c050"/><circle cx="12.500" cy="13" r="4" fill="#e03028" stroke="#fff" stroke-width=".8"/><path d="M10.800 11.300l3.400 3.400M14.200 11.300l-3.400 3.400" stroke="#fff" stroke-width="1.400"/></svg>
<svg class="a" style="left:964px;top:745px;" width="14" height="17" viewBox="0 0 14 17"><path d="M7 0.500c2 1.500 4 2 6.500 2c0 7-2 11-6.500 14c-4.500-3-6.500-7-6.500-14c2.500 0 4.500-.5 6.500-2z" fill="#d83038" stroke="#901018"/><path d="M7 2.500c1.500 1 3 1.500 4.500 1.500c0 5-1.500 8-4.500 10.500z" fill="#e87078"/><circle cx="7" cy="8" r="3.300" fill="#e02020"/><path d="M5.300 6.300l3.400 3.400M8.700 6.300l-3.400 3.400" stroke="#fff" stroke-width="1.500"/></svg>
<div class="t " style="left:986.00px;top:746.29px;font-size:11px;line-height:15px;letter-spacing:0.119px;">16:35</div>
</body></html>
